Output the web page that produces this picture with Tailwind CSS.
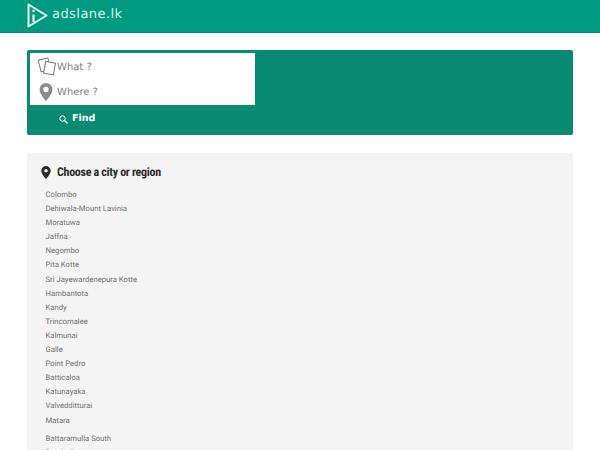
<!DOCTYPE html>
<html lang="en">
<head>
    <meta charset="UTF-8">
    <meta name="viewport" content="width=device-width, initial-scale=1.0">
    <title>adslane.lk</title>
    <script src="https://cdn.jsdelivr.net/npm/@tailwindcss/browser@4"></script>
</head>
<body class="bg-white h-[450px] overflow-hidden font-['Roboto',sans-serif] [text-rendering:geometricPrecision]">
    <header class="bg-[#009a80] h-[33px] border-b border-[#0a8a73] px-[27px] flex items-center">
        <svg class="w-[22px] h-[25px] mb-[5px] mt-[3px]" viewBox="0 0 22 25" fill="none" stroke="#e8f7f3" stroke-width="2">
            <path d="M1.500 1.500 L19.500 12.500 L1.500 23.500 Z" stroke-linejoin="round"/>
            <path d="M6.500 11.500 V19" stroke-width="2.200"/>
            <circle cx="6.500" cy="8" r="1.200" fill="#e8f7f3" stroke="none"/>
        </svg>
        <span class="ml-[3px] mb-[4px] text-[13px] leading-none text-[#d8f2ec] font-['DejaVu_Sans',sans-serif] tracking-[0.45px]">adslane.lk</span>
    </header>

    <main class="px-[27px]">
        <section class="mt-[17px] h-[85px] bg-[#0a8a73] rounded-[2px] p-[3px]">
            <div class="w-[225px] h-[52px] bg-white flex flex-col pt-[1px] font-['DejaVu_Sans',sans-serif] text-[10px] text-[#808080]">
                <div class="h-[26px] flex items-center pl-[8px]">
                    <svg class="w-[19px] h-[19px]" viewBox="0 0 19 19" fill="#fff" stroke="#777" stroke-width="1">
                        <rect x="1.500" y="2" width="10" height="12" transform="rotate(-14 6 8)"/>
                        <rect x="6.500" y="5" width="10" height="12" transform="rotate(10 11 11)"/>
                    </svg>
                    <span class="pt-[1px]">What ?</span>
                </div>
                <div class="h-[26px] flex items-center pl-[9px]">
                    <svg class="w-[14px] h-[18px]" viewBox="0 0 14 18" fill="#8a8a8a">
                        <path fill-rule="evenodd" d="M7 0a6.500 6.500 0 0 1 6.500 6.500C13.500 11 7 18 7 18S.5 11 .5 6.500A6.500 6.500 0 0 1 7 0Zm0 3.800a2.700 2.700 0 1 0 0 5.400 2.700 2.700 0 0 0 0-5.400Z"/>
                    </svg>
                    <span class="ml-[4px] pt-[1px]">Where ?</span>
                </div>
            </div>
            <div class="h-[28px] pl-[29px] flex items-center gap-[4px] font-['DejaVu_Sans',sans-serif] text-[9.500px] font-bold text-white">
                <svg class="w-[9px] h-[9px]" viewBox="0 0 9 9" fill="none" stroke="#fff">
                    <circle cx="3.500" cy="3.500" r="2.700"/>
                    <path d="M5.500 5.500 L8.500 8.500" stroke-width="1.400"/>
                </svg>
                <span>Find</span>
            </div>
        </section>

        <section class="mt-[18px] bg-[#f4f4f4] h-[400px] pt-[11px] pl-[14px]">
            <h2 class="flex items-center h-[16px] font-['Roboto_Condensed','Liberation_Sans_Narrow','Roboto',sans-serif] text-[12px] tracking-[-0.3px] font-bold text-[#2b2b2b]">
                <svg class="w-[10px] h-[13px] mr-[6px]" viewBox="0 0 10 13" fill="#2b2b2b">
                    <path fill-rule="evenodd" d="M5 0a4.700 4.700 0 0 1 4.700 4.700C9.700 8 5 13 5 13S.3 8 .3 4.700A4.700 4.700 0 0 1 5 0Zm0 3a1.800 1.800 0 1 0 0 3.600A1.800 1.800 0 0 0 5 3Z"/>
                </svg>
                Choose a city or region
            </h2>
            <ul class="mt-[8px] pl-[4.500px] text-[7.700px] leading-[14.100px] text-[#707070]">
                <li>Colombo</li>
                <li>Dehiwala-Mount Lavinia</li>
                <li>Moratuwa</li>
                <li>Jaffna</li>
                <li>Negombo</li>
                <li>Pita Kotte</li>
                <li>Sri Jayewardenepura Kotte</li>
                <li>Hambantota</li>
                <li>Kandy</li>
                <li>Trincomalee</li>
                <li>Kalmunai</li>
                <li>Galle</li>
                <li>Point Pedro</li>
                <li>Batticaloa</li>
                <li>Katunayaka</li>
                <li>Valvedditturai</li>
                <li>Matara</li>
                <li class="mt-[4px]">Battaramulla South</li>
                <li>Dambulla</li>
            </ul>
        </section>
    </main>
</body>
</html>
